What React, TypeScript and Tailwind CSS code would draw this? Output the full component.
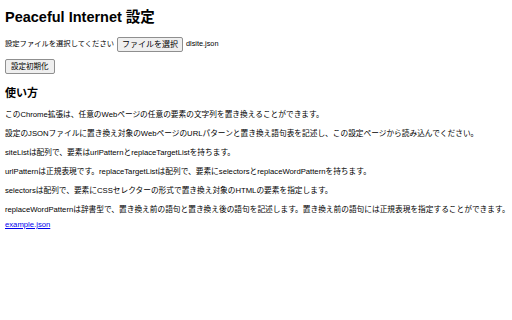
import React from 'react';

const font = { fontFamily: '"Liberation Sans", "Noto Sans CJK JP", sans-serif' };

const paragraphs = [
    'このChrome拡張は、任意のWebページの任意の要素の文字列を置き換えることができます。',
    '設定のJSONファイルに置き換え対象のWebページのURLパターンと置き換え語句表を記述し、この設定ページから読み込んでください。',
    'siteListは配列で、要素はurlPatternとreplaceTargetListを持ちます。',
    'urlPatternは正規表現です。replaceTargetListは配列で、要素にselectorsとreplaceWordPatternを持ちます。',
    'selectorsは配列で、要素にCSSセレクターの形式で置き換え対象のHTMLの要素を指定します。',
    'replaceWordPatternは辞書型で、置き換え前の語句と置き換え後の語句を記述します。置き換え前の語句には正規表現を指定することができます。',
];

export default function App() {
    return (
        <div className="w-[512px] h-[320px] bg-white text-black px-[5px] pt-[8px]" style={font}>
            <h1 className="text-[14.5px] font-bold leading-[18px]">Peaceful Internet 設定</h1>

            <div className="mt-[11px] flex items-center text-[7.3px] h-[15px]">
                <span>設定ファイルを選択してください</span>
                <button className="ml-[3px] h-[15px] px-[4px] text-[8px] bg-[#efefef] border border-[#8f8f8f] rounded-[2px]">
                    ファイルを選択
                </button>
                <span className="ml-[3px]">dlsite.json</span>
            </div>

            <button className="mt-[7px] h-[15px] px-[5px] text-[7.5px] bg-[#efefef] border border-[#8f8f8f] rounded-[2px]">
                設定初期化
            </button>

            <h2 className="mt-[10px] text-[11px] font-bold leading-[14px]">使い方</h2>

            <div className="mt-[10px] text-[7.7px] leading-[9px] flex flex-col gap-[10px]">
                {paragraphs.map((p, i) => (
                    <p key={i} className="whitespace-nowrap">{p}</p>
                ))}
                <a href="#" className="-mt-[4px] text-[#0000ee] underline self-start">example.json</a>
            </div>
        </div>
    );
}
